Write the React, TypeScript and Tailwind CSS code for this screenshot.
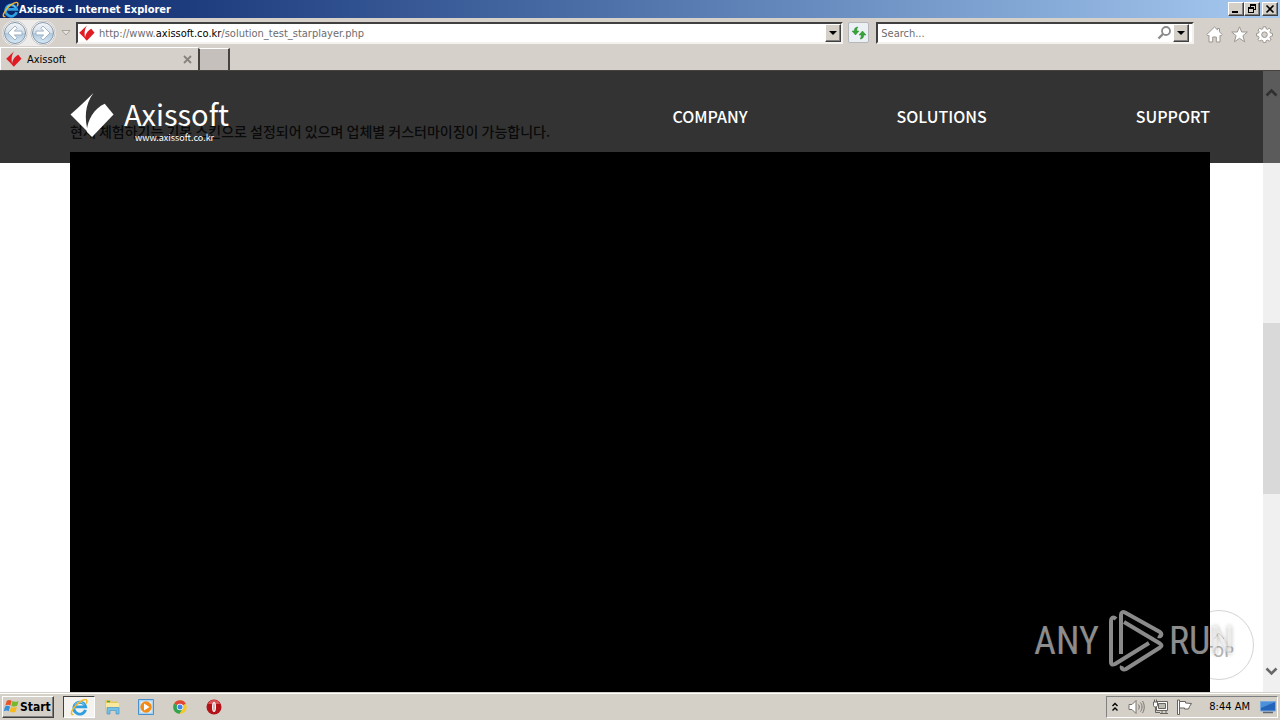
import type { ReactNode } from "react";

const BEVEL =
  "border border-t-white border-l-white border-r-[#404040] border-b-[#404040] bg-[#d4d0c8] shadow-[inset_-1px_-1px_0_#808080]";
const KR = "font-['Noto_Sans_CJK_KR',sans-serif]";

function IeLogo({ size }: { size: number }) {
  return (
    <svg width={size} height={size} viewBox="0 0 20 20" fill="none" aria-hidden="true">
      <path d="M17.200 13.200A6.600 6.600 0 1 1 17.300 9.800H6" stroke="#2f9fe0" strokeWidth="3.200" />
      <path d="M15.800 7.600A5.800 5.800 0 0 0 5.500 7.300" stroke="#8fd4f7" strokeWidth="1" />
      <path
        d="M4 18.200C1 19 .6 16.500 3.300 12.400 7 6.500 13.500 1.500 17 1.600c2.200.1 2.200 2.400.8 4.600"
        stroke="#f4b92c"
        strokeWidth="1.700"
      />
    </svg>
  );
}

function AxisMark({ size, color }: { size: number; color: string }) {
  return (
    <svg width={size} height={size} viewBox="0 0 45 46" fill={color} aria-hidden="true">
      <path d="M23.500 0C15.500 8 9 14 0 22L18 40C14.200 26 14.500 12 23.500 0Z" />
      <path d="M35 11 44 22 22 45 16.500 39.500C17.500 27 24 16 35 11Z" />
    </svg>
  );
}

function NavArrow({ forward }: { forward?: boolean }) {
  return (
    <svg width="26" height="26" viewBox="0 0 26 26" fill="none" aria-hidden="true">
      <defs>
        <linearGradient id={forward ? "orbF" : "orbB"} x1="0" y1="0" x2="0" y2="1">
          <stop offset="0" stopColor="#f4f6f8" />
          <stop offset=".48" stopColor="#d5dfe9" />
          <stop offset=".52" stopColor="#b2c8dc" />
          <stop offset="1" stopColor="#d5ebf8" />
        </linearGradient>
      </defs>
      <circle cx="13" cy="13" r="12" fill="#fff" stroke="#c4c4c4" />
      <circle cx="13" cy="13" r="10.500" fill={`url(#${forward ? "orbF" : "orbB"})`} stroke="#8596a6" />
      <path
        d={
          forward
            ? "M13 6 20 13 13 20 10.800 17.800 13.700 14.900H6V11.100H13.700L10.800 8.200Z"
            : "M13 6 6 13 13 20 15.200 17.800 12.300 14.900H20V11.100H12.300L15.200 8.200Z"
        }
        fill="#fff"
        stroke="#8fa6bb"
        strokeWidth=".8"
      />
    </svg>
  );
}

function DropButton({ label }: { label: string }) {
  return (
    <button aria-label={label} className={`${BEVEL} flex h-[18px] w-4 shrink-0 items-center justify-center`}>
      <svg width="8" height="4" viewBox="0 0 8 4" aria-hidden="true">
        <path d="M0 0h8L4 4Z" fill="#000" />
      </svg>
    </button>
  );
}

function TitleBar() {
  return (
    <header className="flex h-[18px] shrink-0 items-center bg-linear-to-r from-[#0a246a] to-[#a6caf0] px-[2px]">
      <IeLogo size={17} />
      <h1 className="flex-1 truncate pt-[2px] text-[11px] font-bold text-white">Axissoft - Internet Explorer</h1>
      <div className="flex">
        <button aria-label="Minimize" className={`${BEVEL} h-[14px] w-4`}>
          <svg width="14" height="12" viewBox="0 0 14 12" aria-hidden="true">
            <path d="M3 8h6v2H3Z" />
          </svg>
        </button>
        <button aria-label="Restore" className={`${BEVEL} h-[14px] w-4`}>
          <svg width="14" height="12" viewBox="0 0 14 12" fill="none" stroke="#000" shapeRendering="crispEdges" aria-hidden="true">
            <path d="M5.500 4V1.500h5v5H9M5 2.500h6M3.500 4.500h5v5h-5ZM3 5.500h6" />
          </svg>
        </button>
        <button aria-label="Close" className={`${BEVEL} ml-[2px] h-[14px] w-4`}>
          <svg width="14" height="12" viewBox="0 0 14 12" stroke="#000" strokeWidth="1.600" aria-hidden="true">
            <path d="M3.500 2.500l7 7M10.500 2.500l-7 7" />
          </svg>
        </button>
      </div>
    </header>
  );
}

const FIELD =
  "flex h-[22px] items-center border-2 border-t-[#404040] border-l-[#404040] border-r-[#f4f2ee] border-b-[#f4f2ee] bg-white";

function Toolbar() {
  return (
    <div className="flex h-[29px] shrink-0 items-center bg-[#d6d0ca] pr-[7px] pl-[2px]">
      <div className="flex items-center rounded-full bg-[#eeecea]">
        <button aria-label="Back" className="mr-[2px]">
          <NavArrow />
        </button>
        <button aria-label="Forward">
          <NavArrow forward />
        </button>
      </div>
      <button aria-label="Recent pages" className="flex w-[20px] justify-center">
        <svg width="10" height="6" viewBox="0 0 10 6" fill="#e8e5e1" stroke="#a9a39c" aria-hidden="true">
          <path d="M1 .5h8L5 5Z" />
        </svg>
      </button>
      <div className={`${FIELD} relative flex-1`}>
        <span className="ml-px">
          <AxisMark size={16} color="#e01b24" />
        </span>
        <input
          aria-label="Address"
          defaultValue="http://www.axissoft.co.kr/solution_test_starplayer.php"
          className="absolute inset-y-0 right-[20px] left-[20px] text-[11px] text-transparent outline-none"
        />
        <span aria-hidden="true" className="pointer-events-none ml-1 flex-1 truncate pt-1 text-[11px] text-[#6d6d6d]">
          http://www.<span className="text-black">axissoft.co.kr</span>/solution_test_starplayer.php
        </span>
        <DropButton label="Show address history" />
      </div>
      <button
        aria-label="Refresh"
        className="mx-[5px] flex h-[21px] w-[21px] items-center justify-center rounded-xs border border-[#b5b7ba] bg-[#eaf0f4]"
      >
        <svg width="16" height="14" viewBox="0 0 16 14" fill="#35a535" stroke="#197f22" strokeWidth=".4" aria-hidden="true">
          <path d="M7 1C4.500 1 3.200 2.500 3.200 5H1l3.500 4L8 5H5.800C5.800 3.500 6 2 7 1Z" />
          <path d="M9 13c2.500 0 3.800-1.500 3.800-4H15l-3.500-4L8 9h2.200c0 1.500-.2 3-1.200 4Z" />
        </svg>
      </button>
      <div className={`${FIELD} ml-[2px] w-1/4 pr-[3px]`}>
        <input
          aria-label="Search"
          placeholder="Search..."
          className="min-w-0 flex-1 px-[3px] pt-1 text-[11px] outline-none placeholder:text-[#6d6d6d]"
        />
        <button aria-label="Run search" className="mr-px">
          <svg width="15" height="16" viewBox="0 0 15 16" fill="none" stroke="#8b8b8b" aria-hidden="true">
            <circle cx="9" cy="6" r="4" strokeWidth="1.800" />
            <path d="M6 9l-4.500 4.500" strokeWidth="2.400" />
          </svg>
        </button>
        <DropButton label="Search options" />
      </div>
      <div className="ml-3 flex gap-2 pt-1">
        <button aria-label="Home">
          <svg width="17" height="17" viewBox="0 0 17 17" fill="#fff" stroke="#9b9690" aria-hidden="true">
            <path d="M8.500 1 .8 8.500 2.200 10 3 9.300V16h3.700v-5h3.600v5H14V9.300l.8.700 1.400-1.500L13.500 5.800V2.500h-2v1.400Z" />
          </svg>
        </button>
        <button aria-label="Favorites">
          <svg width="17" height="17" viewBox="0 0 17 17" fill="#fff" stroke="#9b9690" aria-hidden="true">
            <path d="M8.500.8 10.700 6h5.600l-4.400 3.700 1.700 6.100-5.100-3.500-5.100 3.500 1.700-6.100L.7 6h5.600Z" />
          </svg>
        </button>
        <button aria-label="Tools">
          <svg width="17" height="17" viewBox="0 0 17 17" fill="#fff" stroke="#9b9690" aria-hidden="true">
            <path d="M7.200.8h2.600l.4 2 1.300.6 1.800-1.200 1.700 1.800-1.100 1.700.6 1.400 2 .4v2.400l-2 .4-.6 1.400 1.100 1.800-1.700 1.700-1.800-1.100-1.300.5-.4 2H7.200l-.4-2-1.400-.5-1.700 1.100L2 13.500l1.100-1.800-.6-1.400-2-.4V7.500l2-.4.600-1.400L2 4l1.700-1.800 1.700 1.200 1.400-.6Z" />
            <circle cx="8.500" cy="8.700" r="2.800" fill="#d6d0ca" />
          </svg>
        </button>
      </div>
    </div>
  );
}

function TabStrip() {
  return (
    <div className="flex h-6 shrink-0 border-b border-[#46423e] bg-[#d6d0ca]">
      <div className="flex w-[198px] items-center border-t border-l border-t-white border-l-white pr-[3px] pl-[5px]">
        <AxisMark size={16} color="#e01b24" />
        <span className="ml-[5px] flex-1 pt-[3px] text-[11px] text-black">Axissoft</span>
        <button aria-label="Close tab" className="p-[3px]">
          <svg width="9" height="9" viewBox="0 0 9 9" stroke="#88827c" strokeWidth="1.800" aria-hidden="true">
            <path d="M1 1l7 7M8 1l-7 7" />
          </svg>
        </button>
      </div>
      <button
        aria-label="New tab"
        className="mt-px w-8 border-t border-r-2 border-l-2 border-t-white border-r-[#46423e] border-l-[#46423e] bg-[#c5c0bb]"
      />
    </div>
  );
}

function SiteHeader() {
  return (
    <div className="absolute inset-x-0 top-0 z-10 h-[92px] bg-black/80">
      <div className={`mx-auto flex h-full max-w-[1140px] items-center justify-between text-white ${KR}`}>
        <a href="#home" className="flex items-start pt-[6px]">
          <AxisMark size={45} color="#fff" />
          <span className="ml-[9px] flex flex-col pt-[5px]">
            <span className="text-[29px] leading-[30px]">Axissoft</span>
            <span className="ml-[11px] text-[9px] leading-[20px]">www.axissoft.co.kr</span>
          </span>
        </a>
        <nav className="flex gap-[149px] pb-[2px] text-[16px] font-medium">
          <a href="#company">COMPANY</a>
          <a href="#solutions">SOLUTIONS</a>
          <a href="#support">SUPPORT</a>
        </nav>
      </div>
    </div>
  );
}

function ScrollBar() {
  return (
    <div className="absolute inset-y-0 right-0 z-20 flex w-[17px] flex-col bg-[#f0f0f0]" aria-hidden="true">
      <div className="flex h-[92px] justify-center bg-[#5b5b5b] pt-[17px]">
        <svg width="13" height="9" viewBox="0 0 13 9" fill="none" stroke="#303030" strokeWidth="2.600">
          <path d="M1.500 7.500l5-5 5 5" />
        </svg>
      </div>
      <div className="flex-[160]" />
      <div className="flex-[171] bg-[#d9d9d9]" />
      <div className="flex-[173]" />
      <div className="flex h-[25px] justify-center">
        <svg width="13" height="9" viewBox="0 0 13 9" fill="none" stroke="#686868" strokeWidth="2.600">
          <path d="M1.500 1.500l5 5 5-5" />
        </svg>
      </div>
    </div>
  );
}

function Watermark() {
  return (
    <div className="pointer-events-none absolute right-[46px] bottom-[20px] z-30 flex items-center font-['Roboto_Condensed','Liberation_Sans_Narrow',sans-serif] text-[38px] leading-[62px] text-white/55 [text-shadow:0_0_4px_rgb(0_0_0/0.3)]">
      <span>ANY</span>
      <svg className="mr-1 ml-[10px]" width="56" height="62" viewBox="0 0 56 62" fill="none" stroke="#8a8a8a" strokeWidth="4" strokeLinejoin="round" aria-hidden="true">
        <path d="M7 9C4 6 2 8 2 11v41c0 3 2 3 4 2L40 33" />
        <path d="M12 44V5c0-3 2-3.500 4-2.500L51 22c2.500 2 1 5.500-2 4" />
        <path d="M15 12l36 21.500c2 1.500 2 2.500 0 4L17 59c-3 1.500-5-.5-4-3" />
      </svg>
      <span>RUN</span>
    </div>
  );
}

function Page() {
  return (
    <main className="relative min-h-0 flex-1 overflow-hidden bg-white">
      <SiteHeader />
      <a
        href="#top"
        className={`absolute right-[26px] bottom-[12px] flex h-[70px] w-[70px] flex-col items-center justify-center rounded-full border border-[#d4d4d4] text-[15px] leading-[18px] font-medium text-[#b4b4b4] ${KR}`}
      >
        <svg width="14" height="12" viewBox="0 0 14 12" fill="none" stroke="currentColor" aria-hidden="true">
          <path d="M2 9l5-6 5 6" />
        </svg>
        TOP
      </a>
      <div className="mx-auto flex h-full max-w-[1140px] flex-col">
        <p className={`pt-[50px] pb-[11px] text-[14px] leading-[20px] font-medium text-[#333] ${KR}`}>
          현재 체험하기는 기본 스킨으로 설정되어 있으며 업체별 커스터마이징이 가능합니다.
        </p>
        <div className="relative flex-1 bg-black" />
      </div>
      <ScrollBar />
      <Watermark />
    </main>
  );
}

function TaskItem({ label, active, children }: { label: string; active?: boolean; children: ReactNode }) {
  return (
    <button
      aria-label={label}
      className={
        active
          ? "flex h-[22px] w-8 items-center justify-center border border-t-[#404040] border-l-[#404040] border-r-white border-b-white bg-[#f5f3f0]"
          : "flex h-[22px] w-[34px] items-center justify-center"
      }
    >
      {children}
    </button>
  );
}

function TaskBar() {
  return (
    <footer className="flex h-7 shrink-0 items-center border-t border-[#d4d0c8] bg-[#d4d0c8] px-[2px] shadow-[inset_0_1px_0_#fff]">
      <button className={`${BEVEL} flex h-[22px] w-[52px] items-center text-[12px] font-bold text-black`}>
        <svg width="17" height="17" viewBox="0 0 18 18" aria-hidden="true">
          <path d="M4 3c2-1.300 3.500-1 5.200-.1L7.800 8C6 7 4.500 7 2.500 8Z" fill="#e8532b" />
          <path d="M10 3.300c2 1 4 1 6.500-.2L15 8.300c-2 1-4 1-6.200.1Z" fill="#78b72c" />
          <path d="M2.200 9c2-1 3.500-1 5.300 0L6 14c-1.600-1-3.200-1-5.200 0Z" fill="#3390dd" />
          <path d="M8.500 9.400c2.200.9 4.200.9 6.300-.1l-1.500 5.200c-2 1-4 1-6.300-.1Z" fill="#f8b91c" />
        </svg>
        Start
      </button>
      <div className="ml-[9px] flex">
        <TaskItem label="Internet Explorer" active>
          <IeLogo size={18} />
        </TaskItem>
        <TaskItem label="File Explorer">
          <svg width="17" height="17" viewBox="0 0 17 17" aria-hidden="true">
            <path d="M1 2h5l1 1.500h7V13H1Z" fill="#e8c75b" />
            <path d="M2 5h13v8H2Z" fill="#f9e9a0" />
            <path d="M3 3.500h3" stroke="#3fae4a" strokeWidth="1.500" />
            <path d="M3 16V9.500h12V16h-3v-3.500H6V16Z" fill="#72bfe8" stroke="#4a97c6" strokeWidth=".7" />
          </svg>
        </TaskItem>
        <TaskItem label="Media Player">
          <svg width="16" height="16" viewBox="0 0 16 16" aria-hidden="true">
            <path d="M.5.5h15v15H.5Z" fill="#a9d3f2" stroke="#4a90cc" />
            <path d="M2.500 2.500h11v11h-11Z" fill="#e9f4fb" />
            <circle cx="8" cy="8" r="5.700" fill="#f28c18" />
            <path d="M6 4.500 11.500 8 6 11.500Z" fill="#fff" />
          </svg>
        </TaskItem>
        <TaskItem label="Chrome">
          <svg width="14" height="14" viewBox="0 0 14 14" aria-hidden="true">
            <circle cx="7" cy="7" r="6.800" fill="#f5c92d" />
            <path d="M7 7 1.100 3.600A6.800 6.800 0 0 1 12.900 3.600Z" fill="#e0453a" />
            <path d="M1.100 3.600A6.800 6.800 0 0 0 6.500 13.800L9.800 8.500 7 7Z" fill="#32a350" />
            <circle cx="7" cy="7" r="3.200" fill="#fff" />
            <circle cx="7" cy="7" r="2.500" fill="#4285e8" />
          </svg>
        </TaskItem>
        <TaskItem label="Opera">
          <svg width="16" height="16" viewBox="0 0 16 16" aria-hidden="true">
            <circle cx="8" cy="8" r="7.500" fill="#b31218" />
            <path d="M2 5a6.500 6.500 0 0 1 12 0Z" fill="#d9555a" />
            <ellipse cx="8" cy="8" rx="2" ry="5" fill="#fff" />
            <ellipse cx="8" cy="8" rx=".8" ry="4" fill="#c9a0a0" />
          </svg>
        </TaskItem>
      </div>
      <div className="ml-auto flex h-[22px] items-center border border-t-[#808080] border-l-[#808080] border-r-white border-b-white pr-px pl-1">
        <button aria-label="Show hidden icons">
          <svg width="8" height="10" viewBox="0 0 8 10" fill="none" stroke="#000" strokeWidth="1.400" aria-hidden="true">
            <path d="M1.500 4 4 1.500 6.500 4M1.500 8.500 4 6l2.500 2.500" />
          </svg>
        </button>
        <svg className="ml-[9px]" width="17" height="16" viewBox="0 0 17 16" fill="#fff" stroke="#77736e" aria-hidden="true">
          <path d="M1 5.500h3L8 1.500v13L4 10.500H1Z" />
          <path d="M10.500 5.500c1 1.500 1 3.500 0 5M12.500 3.500c2 2.500 2 6.500 0 9M14.500 2c2.300 3.500 2.300 8.500 0 12" fill="none" />
        </svg>
        <svg className="ml-[7px]" width="17" height="16" viewBox="0 0 17 16" fill="#fff" stroke="#67635e" aria-hidden="true">
          <path d="M4.500 2.500h11v9h-11Z" />
          <path d="M6.500 4.500h7v5h-7Z" fill="#bdb9b3" />
          <path d="M8 14.500h8M10 11.500v3M14 11.500v3" fill="none" />
          <path d="M3.500 8v5.500H8" fill="none" />
          <path d="M1.500 3h4v3.500L4.500 8h-2l-1-1.500ZM2.500.5V3M4.500.5V3" />
        </svg>
        <svg className="ml-[7px]" width="17" height="16" viewBox="0 0 17 16" fill="#fff" stroke="#67635e" aria-hidden="true">
          <path d="M1.500 1h2v14.500h-2Z" />
          <path d="M3.500 2.500h6v1.500l6 .5-2 3-1 2.500H8.500V9h-5Z" />
        </svg>
        <time className="ml-4 pt-[2px] text-[11px] whitespace-nowrap text-black">8:44 AM</time>
        <svg className="ml-[10px]" width="16" height="16" viewBox="0 0 16 16" aria-hidden="true">
          <path d="M.5 2.500h15v9.500H.5Z" fill="#2465ba" stroke="#78a9dc" />
          <path d="M1 3h14L1 9Z" fill="#4d91da" />
          <path d="M3 13.500h10" stroke="#5f6770" strokeWidth="1.500" />
        </svg>
      </div>
    </footer>
  );
}

export default function App() {
  return (
    <div className="flex h-screen flex-col overflow-hidden bg-[#d4d0c8] font-['DejaVu_Sans_Condensed','DejaVu_Sans',sans-serif]">
      <TitleBar />
      <Toolbar />
      <TabStrip />
      <Page />
      <TaskBar />
    </div>
  );
}
